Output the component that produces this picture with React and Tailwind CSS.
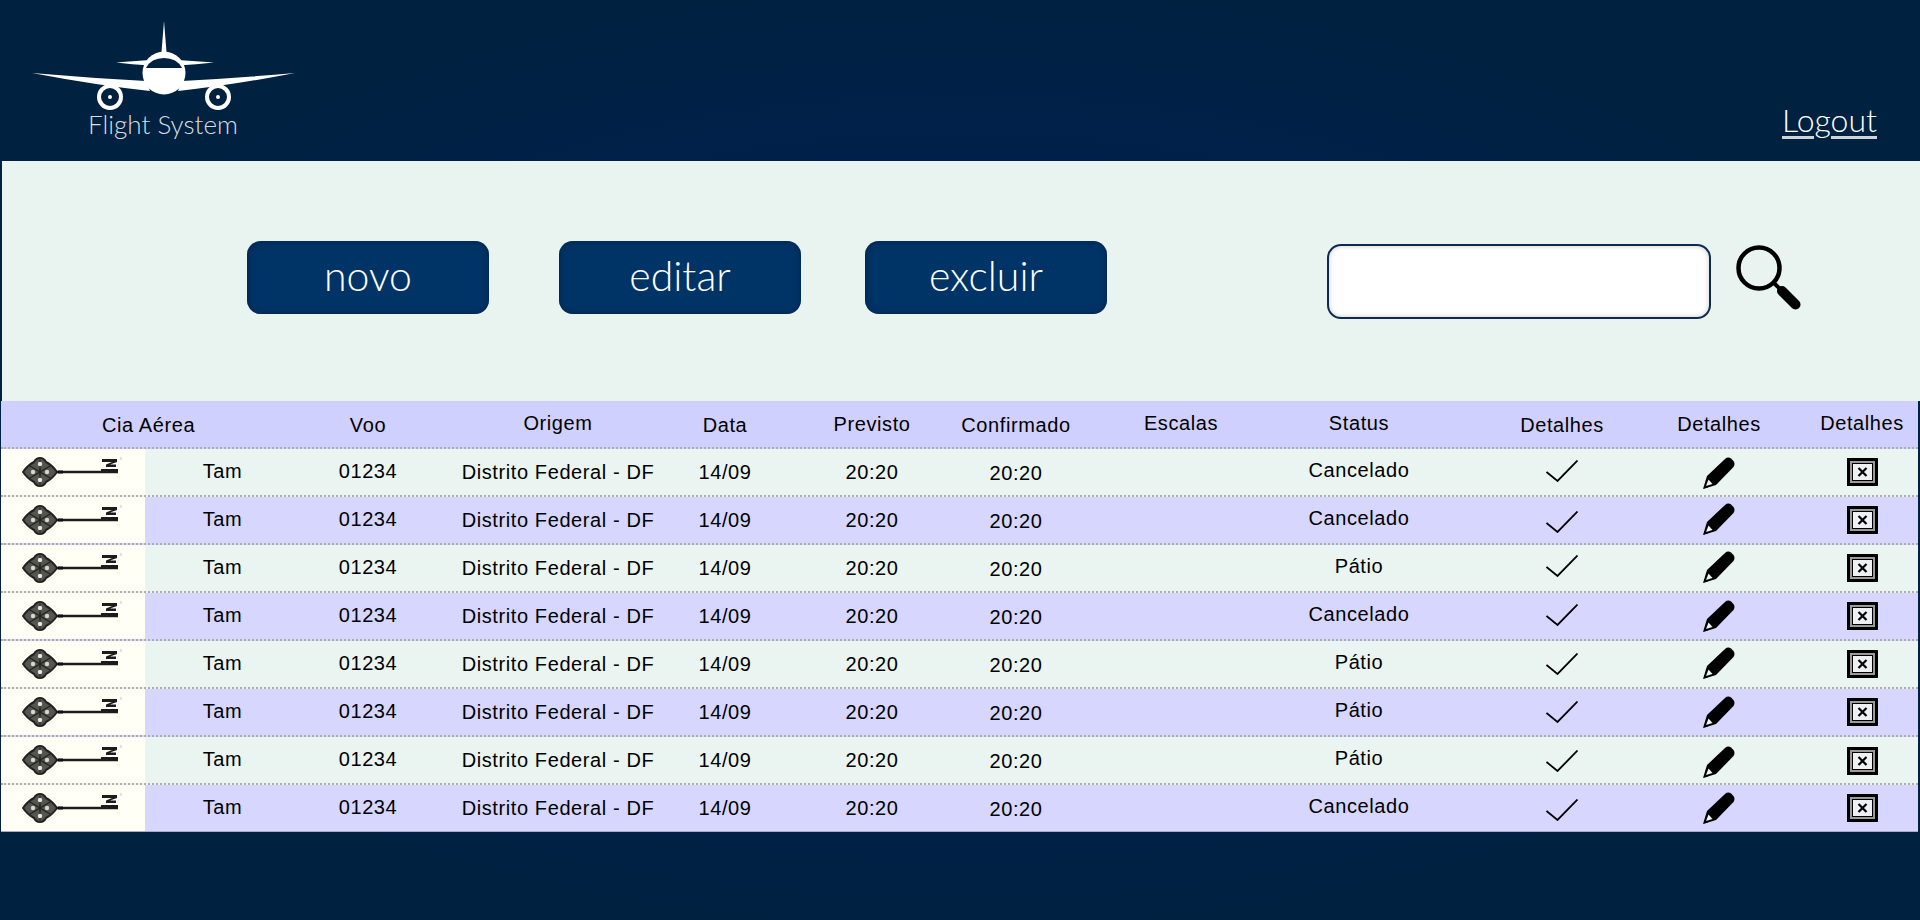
const ROWS = [
  { bg: 'bg-[#eaf4f1]', status: 'Cancelado', check: 'mt-[-2px]', pencil: 'mt-[1px]', box: 'mt-[-1px]' },
  { bg: 'bg-[#d6d6ff]', status: 'Cancelado', check: 'mt-[3px]', pencil: 'mt-[-2px]', box: 'mt-[-1px]' },
  { bg: 'bg-[#eaf4f1]', status: 'Pátio', check: 'mt-[-5px]', pencil: 'mt-[-2px]', box: 'mt-[-1px]' },
  { bg: 'bg-[#d6d6ff]', status: 'Cancelado', check: 'mt-[-2px]', pencil: 'mt-0', box: 'mt-[-1px]' },
  { bg: 'bg-[#eaf4f1]', status: 'Pátio', check: 'mt-0', pencil: 'mt-[-2px]', box: 'mt-[-1px]' },
  { bg: 'bg-[#d6d6ff]', status: 'Pátio', check: 'mt-0', pencil: 'mt-0', box: 'mt-[-1px]' },
  { bg: 'bg-[#eaf4f1]', status: 'Pátio', check: 'mt-[1px]', pencil: 'mt-[3px]', box: 'mt-[1px]' },
  { bg: 'bg-[#d6d6ff]', status: 'Cancelado', check: 'mt-[4px]', pencil: 'mt-0', box: 'mt-0' },
];

const GRID = 'grid grid-cols-[144px_155px_136px_244px_90px_169px_154px_128px_276px_130px_184px_102px]';

function Logo() {
  return (
    <svg viewBox="0 0 326 112" className="block w-[326px] h-[112px]" fill="#fff">
      <path d="M164 21 L166.5 52 L161.5 52 Z" />
      <path d="M116 62.5 Q132 61 150 60 L178 60 Q196 61 214 62.5 Q196 64.5 178 65.5 L150 65.5 Q132 64.5 116 62.5 Z" />
      <path d="M32 73 Q90 78 146 81 L150 91 Q95 85 32 73 Z" />
      <path d="M295 73 Q238 78 182 81 L178 91 Q233 85 295 73 Z" />
      <circle cx="164" cy="73" r="21.5" />
      <path d="M146 68 Q151 58 164 58 Q177 58 182 68 Z" fill="#00223f" />
      <circle cx="110" cy="97" r="11" fill="#00223f" stroke="#fff" strokeWidth="4" />
      <circle cx="110" cy="97" r="2" />
      <circle cx="218" cy="97" r="11" fill="#00223f" stroke="#fff" strokeWidth="4" />
      <circle cx="218" cy="97" r="2" />
    </svg>
  );
}

function KeyIcon() {
  return (
    <svg width="112" height="36" viewBox="0 0 112 36" className="block blur-[0.4px]">
      <path d="M18 4 Q22 4 24 8 Q30 11 35 18 Q30 25 24 28 Q22 32 18 32 Q14 32 12 28 Q6 25 1 18 Q6 11 12 8 Q14 4 18 4 Z" fill="#55554f" stroke="#222" strokeWidth="2" />
      <path d="M8 12 L28 24 M28 12 L8 24 M18 6 V30" stroke="#222" strokeWidth="1.4" />
      <circle cx="18" cy="10" r="2.2" fill="#e6e6dc" />
      <circle cx="11" cy="18" r="2.2" fill="#d6d6cc" />
      <circle cx="25" cy="18" r="2.2" fill="#d6d6cc" />
      <circle cx="18" cy="26" r="2.2" fill="#e6e6dc" />
      <path d="M34 18 H96" stroke="#1c1c1c" strokeWidth="2.4" />
      <path d="M36 16.5 H41 V19.5 H36 Z" fill="#111" />
      <path d="M80 5 H95 V8 L88 10.5 H94 V13 H84 V10.5 L90 8 H80 Z" fill="#1c1c1c" />
      <path d="M79 15 H96 V19 H79 Z" fill="#1c1c1c" />
      <path d="M99 3 V6" stroke="#c9c9c0" strokeWidth="1" />
    </svg>
  );
}

function CheckIcon() {
  return (
    <svg width="32" height="22" viewBox="0 0 32 22" className="block">
      <path d="M0.5 12 L11.5 21 L31.5 0.5" fill="none" stroke="#000" strokeWidth="1.8" />
    </svg>
  );
}

function PencilIcon() {
  return (
    <svg width="32" height="32" viewBox="0 0 32 32" className="block">
      <path d="M0 32 L4 19 L22 2 Q25 -0.5 28 1.5 L30.5 4 Q32.5 7 30.5 10 L13 28 Z" fill="#000" />
      <path d="M3 29 L5.5 22.5 L9.5 27 Z" fill="#eef3f3" />
      <path d="M1 31.5 L2 27.5 L5 30.5 Z" fill="#000" />
    </svg>
  );
}

function BoxIcon() {
  return (
    <svg width="31" height="28" viewBox="0 0 31 28" className="block">
      <rect x="0" y="0" width="31" height="28" fill="#000" />
      <rect x="3" y="3" width="25" height="22" fill="#9a9a9a" />
      <rect x="5" y="5" width="21" height="18" fill="#000" />
      <rect x="6" y="6" width="19" height="16" fill="#eef1f1" />
      <path d="M11.5 10 L19.5 18 M19.5 10 L11.5 18" stroke="#000" strokeWidth="2.2" />
    </svg>
  );
}

function SearchIcon() {
  return (
    <svg width="66" height="66" viewBox="0 0 66 66" className="block">
      <circle cx="23" cy="23" r="20.5" fill="none" stroke="#000" strokeWidth="4.5" />
      <path d="M38 38 L46 46" stroke="#000" strokeWidth="4" />
      <path d="M46 46 L59.5 59.5" stroke="#000" strokeWidth="10" strokeLinecap="round" />
    </svg>
  );
}

function ActionButton({ label, className }) {
  return (
    <button className={`w-[242px] h-[73px] pb-[3px] rounded-[14px] bg-[#003366] shadow-[inset_0_0_6px_#00234a] text-white text-[41px] font-light font-['Lato',sans-serif] ${className}`}>
      {label}
    </button>
  );
}

export default function App() {
  return (
    <div className="w-[1920px] h-[920px] overflow-hidden bg-[#00213f] bg-[radial-gradient(ellipse_at_center,#001f52_0%,#00204c_45%,#00213f_75%)]">
      {/* Header */}
      <header className="h-[161px] flex justify-between">
        <div className="w-[326px]">
          <Logo />
          <p className="text-center text-[26px] leading-[30px] mt-[-3px] font-light text-[#d9dde2] font-['Lato',sans-serif]">Flight System</p>
        </div>
        <div className="pt-[102px] pr-[43px]">
          <a className="block text-[32px] leading-[36px] font-light text-white underline decoration-[#d0d4d8] underline-offset-[4px] font-['Lato',sans-serif]">Logout</a>
        </div>
      </header>

      {/* Actions */}
      <section className="h-[240px] ml-[2px] bg-[#e9f4f0] flex items-start pt-[80px] pl-[245px]">
        <ActionButton label="novo" />
        <ActionButton label="editar" className="ml-[70px]" />
        <ActionButton label="excluir" className="ml-[64px]" />
        <input className="ml-[220px] mt-[3px] w-[384px] h-[75px] rounded-[14px] border-2 border-[#0c2b50] bg-white shadow-[inset_0_0_5px_#c8c8c8]" />
        <div className="ml-[25px] mt-[4px]"><SearchIcon /></div>
      </section>

      {/* Table */}
      <div className="ml-[1px] mr-[2px] font-['Liberation_Sans',sans-serif] text-[20px] tracking-[0.6px] text-black">
        <div className={`${GRID} h-[48px] items-center bg-[#d0d0fe] border-b-2 border-dotted border-[#adadb5] text-center whitespace-nowrap`}>
          <span className="col-span-2 mt-[2px] pr-[4px]">Cia Aérea</span>
          <span className="mt-[2px]">Voo</span>
          <span className="mt-[-2px]">Origem</span>
          <span className="mt-[2px]">Data</span>
          <span className="pl-[35px]">Previsto</span>
          <span className="mt-[2px]">Confirmado</span>
          <span className="mt-[-2px] pl-[48px]">Escalas</span>
          <span className="mt-[-2px]">Status</span>
          <span className="mt-[2px]">Detalhes</span>
          <span className="mt-[-1px]">Detalhes</span>
          <span className="mt-[-3px]">Detalhes</span>
        </div>
        {ROWS.map((row, i) => (
          <div
            key={i}
            className={`${GRID} items-center text-center whitespace-nowrap ${row.bg} ${i === ROWS.length - 1 ? 'h-[47px] border-b border-[#a9a9c8]' : 'h-[48px] border-b-2 border-dotted border-[#adadad]'}`}
          >
            <div className="h-full flex items-center pl-[21px] bg-[#fffff6]"><KeyIcon /></div>
            <span className="mt-[-3px]">Tam</span>
            <span className="mt-[-3px]">01234</span>
            <span className="mt-[-1px]">Distrito Federal - DF</span>
            <span className="mt-[-1px]">14/09</span>
            <span className="pl-[35px] mt-[-1px]">20:20</span>
            <span className="mt-[1px]">20:20</span>
            <span />
            <span className="mt-[-4px]">{row.status}</span>
            <div className={`flex justify-center ${row.check}`}><CheckIcon /></div>
            <div className={`flex justify-center ${row.pencil}`}><PencilIcon /></div>
            <div className={`flex justify-center ${row.box}`}><BoxIcon /></div>
          </div>
        ))}
      </div>
    </div>
  );
}
